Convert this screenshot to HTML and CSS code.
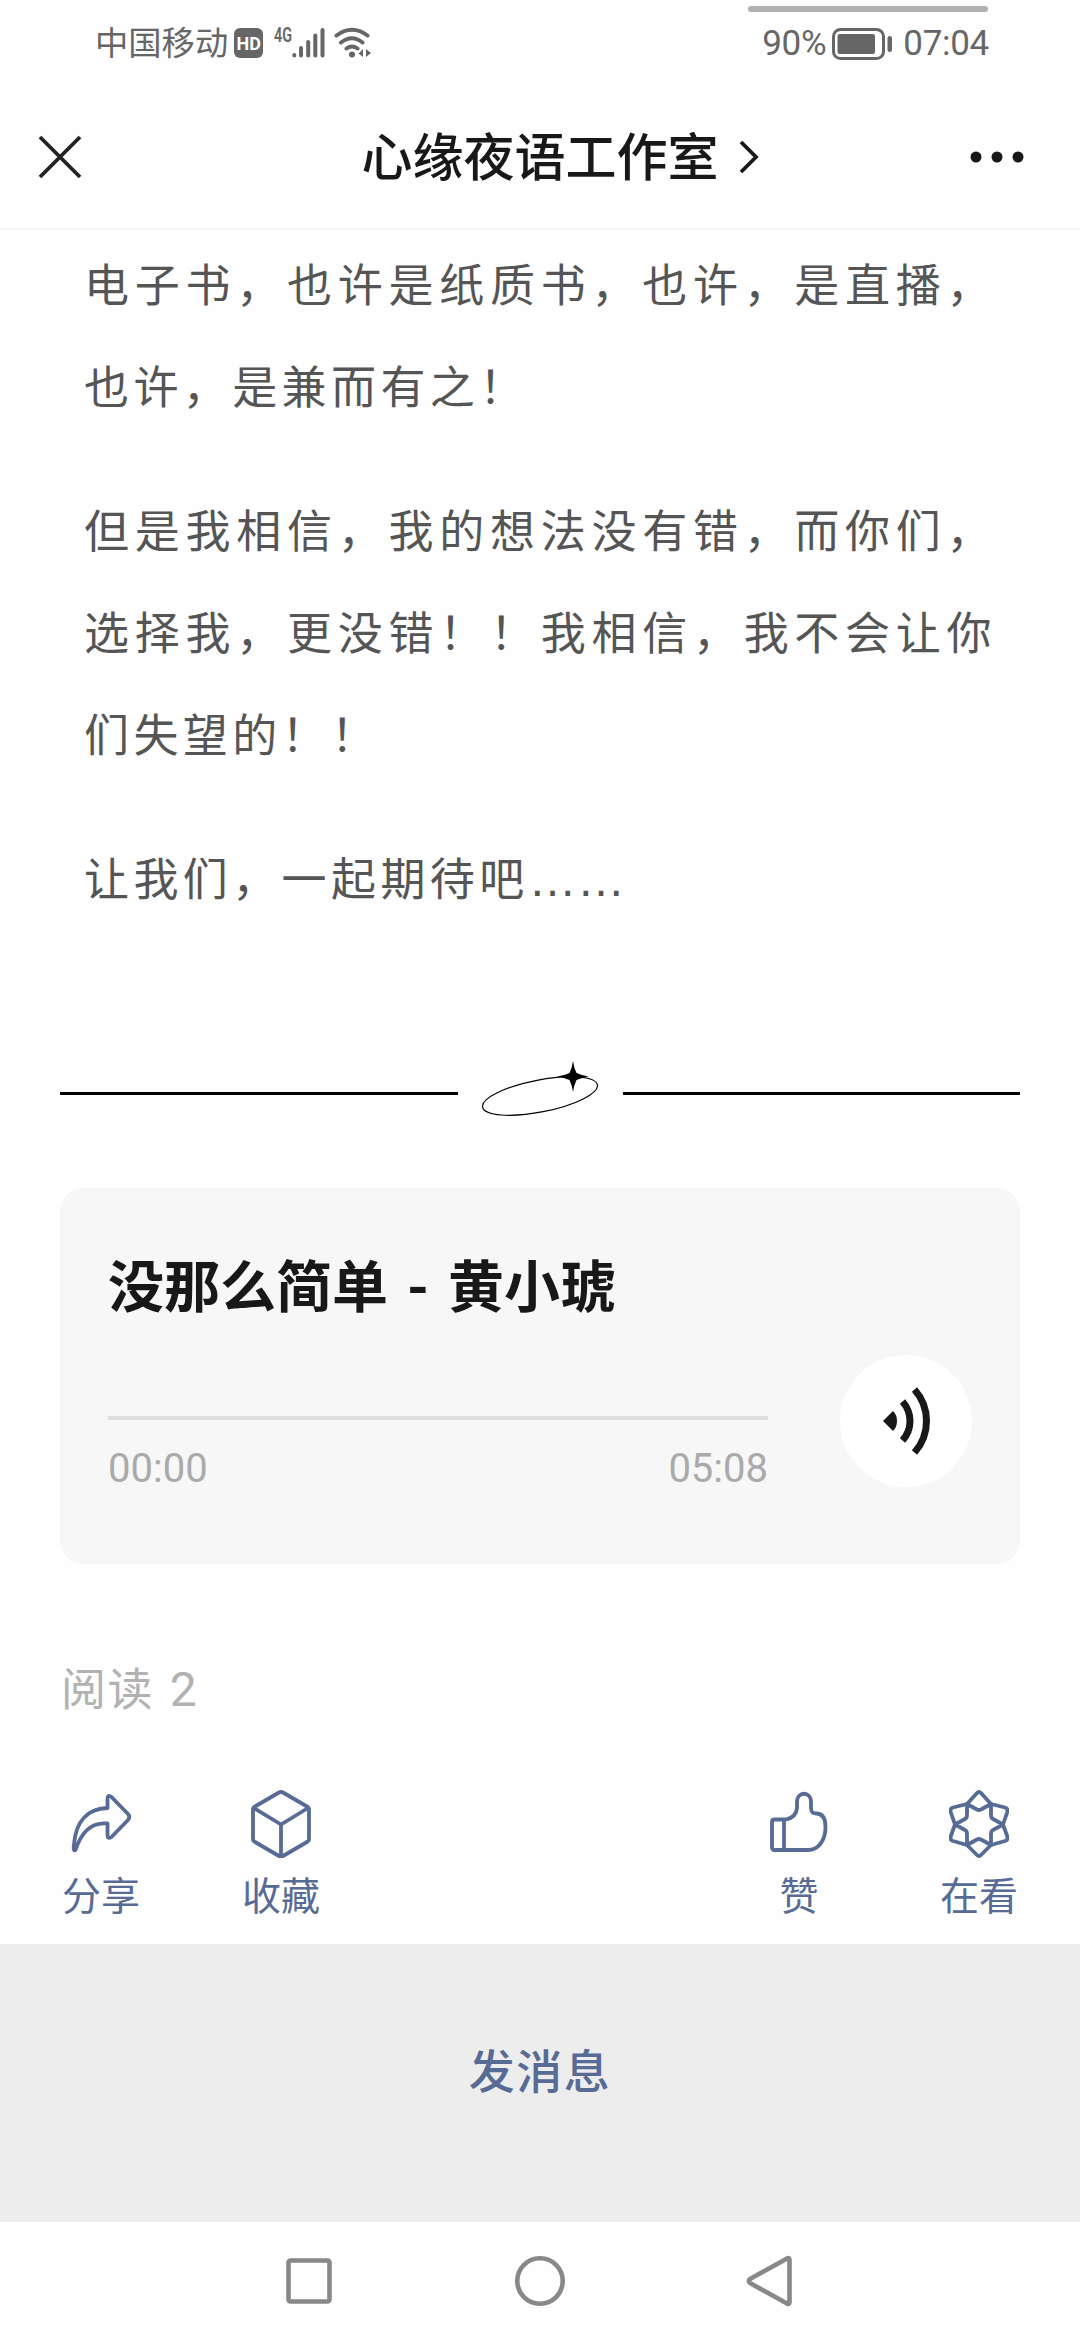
FILE: index.html
```html
<!DOCTYPE html>
<html lang="zh-CN">
<head>
    <meta charset="UTF-8">
    <meta name="viewport" content="width=device-width, initial-scale=1.0">
    <title>心缘夜语工作室</title>
    <link rel="stylesheet" href="styles.css">
</head>
<body>
    <div class="status-bar">
        <div class="status-left">
            <span class="carrier">中国移动</span>
            <span class="hd">HD</span>
            <span class="net">4G</span>
            <svg class="signal" width="34" height="32" viewBox="0 0 34 32" stroke="#666" stroke-width="4" stroke-linecap="round">
                <path d="M2.3 28v.6M9 21v7.6M16.2 15v13.6M23.3 8.500v20.100M30.500 3v25.600"/>
            </svg>
            <svg class="wifi" width="38" height="32" viewBox="0 0 38 32" fill="none" stroke="#666" stroke-width="4" stroke-linecap="round">
                <path d="M2.500 8.500Q18 -3 33.500 8.500M7 15.500Q18 7 28.500 15.500M12.500 21.500Q18 17.500 23.500 21.500"/>
                <circle cx="18" cy="27.500" r="3" fill="#666" stroke="none"/>
                <path d="M29 22v8l-4.500-3.500zM32 22v8l5-4z" fill="#666" stroke="none"/>
            </svg>
        </div>
        <div class="status-right">
            <span>90%</span>
            <svg class="battery" width="62" height="32" viewBox="0 0 62 32">
                <rect x="1.500" y="1.500" width="50" height="29" rx="7" fill="none" stroke="#666" stroke-width="3"/>
                <rect x="5.500" y="6" width="37.500" height="20" rx="2" fill="#666"/>
                <rect x="55.500" y="8" width="4.500" height="16" rx="2.200" fill="#666"/>
            </svg>
            <span>07:04</span>
        </div>
        <div class="top-line"></div>
    </div>

    <header>
        <svg class="close" width="44" height="44" viewBox="0 0 44 44" fill="none" stroke="#222" stroke-width="3.800">
            <path d="M2 2l40 40M42 2L2 42"/>
        </svg>
        <h1>心缘夜语工作室
            <svg width="20" height="34" viewBox="0 0 20 34" fill="none" stroke="#181818" stroke-width="3.800">
                <path d="M2 2l15 15L2 32"/>
            </svg>
        </h1>
        <svg class="more" width="54" height="12" viewBox="0 0 54 12" fill="#181818">
            <circle cx="6" cy="6" r="5.500"/><circle cx="27" cy="6" r="5.500"/><circle cx="48" cy="6" r="5.500"/>
        </svg>
    </header>

    <main>
        <article>
            <p>电子书，也许是纸质书，也许，是直播，也许，是兼而有之！</p>
            <p>但是我相信，我的想法没有错，而你们，选择我，更没错！！我相信，我不会让你们失望的！！</p>
            <p>让我们，一起期待吧<span class="dots">……</span></p>
        </article>

        <div class="divider">
            <i></i>
            <svg width="165" height="66" viewBox="0 0 165 66">
                <ellipse cx="82" cy="36" rx="58.500" ry="16" transform="rotate(-11 82 36)" fill="none" stroke="#000" stroke-width="1.200"/>
                <path d="M115 1Q116 8 118.500 13Q124 15.500 130.500 16.500Q124 17.500 118.500 20Q116 25 115 32Q114 25 111.500 20Q106 17.500 99.500 16.500Q106 15.500 111.500 13Q114 8 115 1z"/>
            </svg>
            <i></i>
        </div>

        <section class="music">
            <h2>没那么简单 - 黄小琥</h2>
            <div class="player">
                <div class="track">
                    <div class="progress"></div>
                    <div class="times"><span>00:00</span><span>05:08</span></div>
                </div>
                <div class="play">
                    <svg width="48" height="68" viewBox="0 0 48 68" fill="none" stroke="#181818" stroke-width="7">
                        <path d="M0 34L10 24Q14 28 14 34T10 44z" fill="#181818" stroke="none"/>
                        <path d="M19.500 14.500Q27 23 27 34T19.500 53.500M31.500 2.500Q43.500 16 43.500 34T31.500 65.500"/>
                    </svg>
                </div>
            </div>
        </section>

        <div class="read">阅读 <span>2</span></div>

        <div class="actions">
            <a class="action">
                <svg width="60" height="68" viewBox="0 0 60 68">
                    <path d="M36.500 18V9q0-5 4-2L57 24q2.500 3 0 6L40.500 47q-4 2.500-4-2V33.500C22 32 11 40 4.500 60Q2 62 3 54C5 31 17 18.500 36.500 18z"/>
                </svg>
                <span>分享</span>
            </a>
            <a class="action">
                <svg width="60" height="68" viewBox="0 0 60 68">
                    <path d="M28 2.500q2-1 4 0L56 16.500q2 1 2 3V49q0 2-2 3L32 66q-2 1-4 0L4 52q-2-1-2-3V19.500q0-2 2-3zM3 18l27 16.500L57 18M30 34.500V66"/>
                </svg>
                <span>收藏</span>
            </a>
            <a class="action like">
                <svg width="60" height="68" viewBox="0 0 60 68">
                    <path d="M5.500 29.500H17C24 28 27.500 24 28 18V12C28 1 42 1 42 12V18C42 22 43 23.500 48 23.500C54 24 56.500 29 56.500 37C56.500 51 49 60 39 60H5.500Q3 60 3 57.500V32Q3 29.500 5.500 29.500zM15 29.500V60"/>
                </svg>
                <span>赞</span>
            </a>
            <a class="action">
                <svg width="60" height="68" viewBox="0 0 60 68">
                    <path d="M28 3Q30 1 32 3L42 14L56 17.500Q59 18.500 58.500 21.500L54 34.500L58.500 47Q59 50 56 51L42 55L32 65Q30 67 28 65L18 55L4 51Q1 50 1.500 47L6 34.500L1.500 21.500Q1 18.500 4 17.500L18 14z"/>
                    <path d="M18 14L28 19.500Q30 20.500 32 19.500L42 14V25Q42 28 44 29L54 34.500L44 40Q42 41 42 44V55L32 49.500Q30 48.500 28 49.500L18 55V44Q18 41 16 40L6 34.500L16 29Q18 28 18 25z"/>
                </svg>
                <span>在看</span>
            </a>
        </div>
    </main>

    <footer>发消息</footer>

    <nav>
        <svg width="52" height="52" viewBox="0 0 52 52"><rect x="5.500" y="5.500" width="41" height="41" rx="2"/></svg>
        <svg width="52" height="52" viewBox="0 0 52 52"><circle cx="26" cy="26" r="22.700"/></svg>
        <svg width="52" height="52" viewBox="0 0 52 52"><path d="M42 3.500Q44.500 2 44.500 5V47Q44.500 50 42 48.500L5 28Q3 26 5 24z"/></svg>
    </nav>
</body>
</html>
```
FILE: styles.css
```css
:root {
    --bg: #fefefe;
    --text: #181818;
    --link: #576b95;
    --status: #666;
}

* {
    margin: 0;
    padding: 0;
    box-sizing: border-box;
}

body {
    width: 1080px;
    height: 2340px;
    display: flex;
    flex-direction: column;
    overflow: hidden;
    background: var(--bg);
    color: var(--text);
    font-family: Roboto, "Noto Sans CJK SC", sans-serif;
}

svg {
    display: block;
    flex-shrink: 0;
}

.status-bar {
    position: relative;
    height: 86px;
    padding: 0 91px 0 95px;
    display: flex;
    justify-content: space-between;
    align-items: center;
    color: var(--status);
}

.top-line {
    position: absolute;
    top: 6px;
    right: 92px;
    width: 240px;
    height: 6px;
    border-radius: 3px;
    background: #b0b0b0;
}

.status-left,
.status-right {
    display: flex;
    align-items: center;
}

.carrier {
    padding-top: 2px;
    font-size: 33.3px;
    line-height: 40px;
}

.hd {
    width: 29px;
    height: 30px;
    margin-left: 6px;
    border-radius: 6px;
    background: var(--status);
    color: #fff;
    font-size: 18px;
    font-weight: 700;
    line-height: 31px;
    text-align: center;
}

.net {
    width: 18px;
    margin: 0 0 17px 11px;
    font-size: 20px;
    font-weight: 600;
    line-height: 18px;
    transform: scaleX(0.72);
    transform-origin: left;
}

.wifi {
    margin-left: 8px;
}

.status-right {
    padding-top: 1px;
    font-size: 35px;
    letter-spacing: -0.3px;
}

.battery {
    margin: 0 9px 0 6px;
}

header {
    height: 144px;
    padding: 0 56px 0 38px;
    display: grid;
    grid-template-columns: 72px 1fr 54px;
    align-items: center;
    border-bottom: 2px solid #f5f5f5;
}

h1 {
    display: flex;
    align-items: center;
    justify-content: center;
    gap: 20px;
    padding: 3px 0 0 40px;
    font-size: 51px;
    font-weight: 500;
    line-height: 60px;
}

h1 svg {
    margin-top: -3px;
}

article {
    padding: 6px 84px 0;
    color: #555;
    font-size: 45px;
    line-height: 102px;
    letter-spacing: 4.4px;
    text-align: justify;
}

article p {
    margin-bottom: 42px;
}

.dots {
    font-family: "Liberation Sans", sans-serif;
    font-size: 48px;
    line-height: 1;
    letter-spacing: 0.5px;
}

.divider {
    height: 66px;
    margin: 128px 60px 0;
    display: flex;
    align-items: center;
}

.divider i {
    flex: 1;
    height: 3px;
    background: #000;
}

.music {
    height: 376px;
    margin: 62px 60px 0;
    padding: 65px 48px 0;
    border-radius: 24px;
    background: #f7f7f7;
}

.music h2 {
    font-size: 56px;
    font-weight: 700;
    line-height: 70px;
    word-spacing: 5px;
}

.player {
    display: flex;
    justify-content: space-between;
    padding-top: 32px;
}

.track {
    width: 660px;
    padding-top: 61px;
}

.progress {
    height: 4px;
    background: #dedede;
}

.times {
    display: flex;
    justify-content: space-between;
    padding-top: 25px;
    color: #aaa;
    font-size: 40px;
    line-height: 48px;
}

.play {
    width: 132px;
    height: 132px;
    padding-left: 2px;
    border-radius: 50%;
    background: #fff;
    display: flex;
    align-items: center;
    justify-content: center;
}

.read {
    margin: 96px 61px 0;
    color: #b2b2b2;
    font-size: 45px;
    line-height: 60px;
    letter-spacing: 1.5px;
}

.read span {
    margin-left: 3px;
    font-size: 48px;
}

.actions {
    display: flex;
    padding: 69px 62px 0;
    color: var(--link);
}

.action {
    width: 78px;
    margin-right: 102px;
    display: flex;
    flex-direction: column;
    align-items: center;
    font-size: 39px;
    line-height: 50px;
}

.action svg {
    margin-bottom: 14px;
    fill: none;
    stroke: var(--link);
    stroke-width: 3.8;
    stroke-linejoin: round;
}

.action.like {
    margin-left: auto;
}

.action:last-child {
    margin-right: 0;
}

footer {
    height: 278px;
    margin-top: auto;
    padding-top: 98px;
    background: #ededed;
    color: var(--link);
    font-size: 46px;
    font-weight: 500;
    line-height: 60px;
    letter-spacing: 1.5px;
    text-align: center;
}

nav {
    height: 118px;
    display: flex;
    justify-content: center;
    align-items: center;
    gap: 179px;
}

nav svg {
    fill: none;
    stroke: #888;
    stroke-width: 4.6;
}
```
